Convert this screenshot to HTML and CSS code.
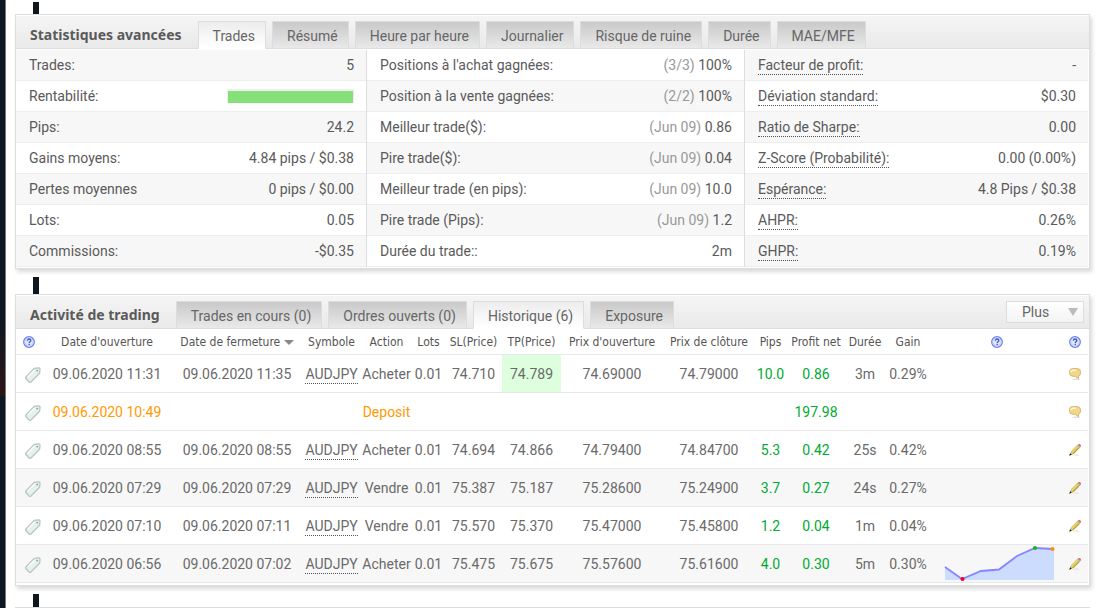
FILE: index.html
```html
<!DOCTYPE html>
<html lang="fr">

<head>
    <meta charset="UTF-8">
    <meta name="viewport" content="width=device-width, initial-scale=1.0">
    <title>Statistiques avancées</title>
    <link rel="stylesheet" href="styles.css">
</head>

<body>

    <svg class="defs" aria-hidden="true">
        <symbol id="icon-help" viewBox="0 0 12 12">
            <circle cx="6" cy="6" r="5.3" fill="#dfe6fd" stroke="#6a84ea" stroke-width="1.3"/>
            <circle cx="6" cy="6" r="4.2" fill="none" stroke="#b9c6f8" stroke-width="0.8"/>
            <path d="M4.4 4.7C4.5 3.5 5.2 3 6.1 3c1 0 1.7.6 1.7 1.4C7.8 5.6 6.2 5.7 6.2 7" fill="none" stroke="#3f54cc" stroke-width="1.3"/>
            <rect x="5.5" y="7.8" width="1.4" height="1.3" fill="#3f54cc"/>
        </symbol>
        <symbol id="icon-tag" viewBox="0 0 16 16">
            <path d="M9.3 1.3 13.7.8Q15 .7 15 2.2L14.6 6.2 6 15Q5 15.8 4 14.9L1 11.7Q.2 10.8 1 9.9Z" fill="#e6f1ee" stroke="#b4c5c2" stroke-width="1.3"/>
            <path d="M9.7 2.8 3 9.8" fill="none" stroke="#fff" stroke-width="1.2"/>
            <circle cx="12.2" cy="3.6" r="0.9" fill="#8b9a98"/>
        </symbol>
        <symbol id="icon-comment" viewBox="0 0 12 12">
            <ellipse cx="7" cy="11.2" rx="4" ry="0.8" fill="#e0e0e0"/>
            <path d="M4 .6H8Q11.5.6 11.5 3.6V4.8Q11.5 7.6 9.4 8.1L9.6 10.8 6.3 8.3H4Q.5 8.3.5 4.8V3.6Q.5.6 4 .6Z" fill="#f0d78c" stroke="#d9b56a" stroke-width="1"/>
            <path d="M2.3 4.2Q2.3 2.3 4.2 2.3H7.2" fill="none" stroke="#fff8d8" stroke-width="1.4"/>
        </symbol>
        <symbol id="icon-pencil" viewBox="0 0 12 12">
            <path d="M3 11.8H10.5L8 10Z" fill="#e4e4e4"/>
            <path d="M1.7 7.9 8.3 1.3 10.7 3.7 4.1 10.3Z" fill="#ead65e" stroke="#b5a04a" stroke-width="0.5"/>
            <path d="M3.8 9.8 10.2 3.4" stroke="#8c7a35" stroke-width="0.9"/>
            <path d="M7.9 1.7 9.1.5 11.5 2.9 10.3 4.1Z" fill="#aab6bc"/>
            <path d="M8.9.5Q10.3-.4 11.4.6 12.4 1.7 11.5 3.1Z" fill="#e85858"/>
            <path d="M1.7 7.9 4.1 10.3.5 11.5Z" fill="#d9b988"/>
            <path d="M1.2 9.3 2.7 10.8.2 11.8Z" fill="#111"/>
        </symbol>
    </svg>

    <main class="page">
        <div class="connector"></div>

        <section class="panel">
            <div class="panel-header">
                <h2>Statistiques avancées</h2>
                <div class="tabs">
                    <button type="button" class="tab active">Trades</button>
                    <button type="button" class="tab">Résumé</button>
                    <button type="button" class="tab">Heure par heure</button>
                    <button type="button" class="tab">Journalier</button>
                    <button type="button" class="tab">Risque de ruine</button>
                    <button type="button" class="tab">Durée</button>
                    <button type="button" class="tab">MAE/MFE</button>
                </div>
            </div>

            <div class="stats">
                <table class="stats-table">
                    <tr><th scope="row">Trades:</th><td>5</td></tr>
                    <tr><th scope="row">Rentabilité:</th><td><div class="profit-bar"></div></td></tr>
                    <tr><th scope="row">Pips:</th><td>24.2</td></tr>
                    <tr><th scope="row">Gains moyens:</th><td>4.84 pips / $0.38</td></tr>
                    <tr><th scope="row">Pertes moyennes</th><td>0 pips / $0.00</td></tr>
                    <tr><th scope="row">Lots:</th><td>0.05</td></tr>
                    <tr><th scope="row">Commissions:</th><td>-$0.35</td></tr>
                </table>
                <table class="stats-table shifted">
                    <tr><th scope="row">Positions à l'achat gagnées:</th><td><span class="muted">(3/3)</span> 100%</td></tr>
                    <tr><th scope="row">Position à la vente gagnées:</th><td><span class="muted">(2/2)</span> 100%</td></tr>
                    <tr><th scope="row">Meilleur trade($):</th><td><span class="muted">(Jun 09)</span> 0.86</td></tr>
                    <tr><th scope="row">Pire trade($):</th><td><span class="muted">(Jun 09)</span> 0.04</td></tr>
                    <tr><th scope="row">Meilleur trade (en pips):</th><td><span class="muted">(Jun 09)</span> 10.0</td></tr>
                    <tr><th scope="row">Pire trade (Pips):</th><td><span class="muted">(Jun 09)</span> 1.2</td></tr>
                    <tr><th scope="row">Durée du trade::</th><td>2m</td></tr>
                </table>
                <table class="stats-table">
                    <tr><th scope="row"><span class="hint">Facteur de profit:</span></th><td>-</td></tr>
                    <tr><th scope="row"><span class="hint">Déviation standard:</span></th><td>$0.30</td></tr>
                    <tr><th scope="row"><span class="hint">Ratio de Sharpe:</span></th><td>0.00</td></tr>
                    <tr><th scope="row"><span class="hint">Z-Score (Probabilité):</span></th><td>0.00 (0.00%)</td></tr>
                    <tr><th scope="row"><span class="hint">Espérance:</span></th><td>4.8 Pips / $0.38</td></tr>
                    <tr><th scope="row"><span class="hint">AHPR:</span></th><td>0.26%</td></tr>
                    <tr><th scope="row"><span class="hint">GHPR:</span></th><td>0.19%</td></tr>
                </table>
            </div>
        </section>

        <div class="connector"></div>

        <section class="panel">
            <div class="panel-header">
                <h2>Activité de trading</h2>
                <div class="tabs">
                    <button type="button" class="tab">Trades en cours (0)</button>
                    <button type="button" class="tab">Ordres ouverts (0)</button>
                    <button type="button" class="tab active">Historique (6)</button>
                    <button type="button" class="tab">Exposure</button>
                </div>
                <button type="button" class="more">Plus <span class="arrow"></span></button>
            </div>

            <table class="history">
                <colgroup>
                    <col class="c-icon"><col class="c-date"><col class="c-date"><col class="c-symbol">
                    <col class="c-action"><col class="c-lots"><col class="c-sl"><col class="c-tp">
                    <col class="c-open"><col class="c-close"><col class="c-pips"><col class="c-profit">
                    <col class="c-time"><col class="c-gain"><col class="c-chart"><col class="c-icon">
                </colgroup>
                <thead>
                    <tr>
                        <th><svg class="help"><use href="#icon-help"/></svg></th>
                        <th>Date d'ouverture</th>
                        <th>Date de fermeture <span class="arrow small"></span></th>
                        <th>Symbole</th>
                        <th>Action</th>
                        <th>Lots</th>
                        <th>SL(Price)</th>
                        <th>TP(Price)</th>
                        <th>Prix d'ouverture</th>
                        <th>Prix de clôture</th>
                        <th>Pips</th>
                        <th>Profit net</th>
                        <th>Durée</th>
                        <th>Gain</th>
                        <th><svg class="help"><use href="#icon-help"/></svg></th>
                        <th><svg class="help"><use href="#icon-help"/></svg></th>
                    </tr>
                </thead>
                <tbody>
                    <tr>
                        <td><svg class="tag"><use href="#icon-tag"/></svg></td>
                        <td>09.06.2020 11:31</td><td>09.06.2020 11:35</td>
                        <td><span class="hint">AUDJPY</span></td>
                        <td>Acheter</td><td>0.01</td><td>74.710</td><td class="hit">74.789</td>
                        <td>74.69000</td><td>74.79000</td>
                        <td class="gain">10.0</td><td class="gain">0.86</td>
                        <td>3m</td><td>0.29%</td><td></td>
                        <td><svg class="edit"><use href="#icon-comment"/></svg></td>
                    </tr>
                    <tr class="deposit">
                        <td><svg class="tag"><use href="#icon-tag"/></svg></td>
                        <td>09.06.2020 10:49</td><td></td><td></td>
                        <td>Deposit</td><td></td><td></td><td></td><td></td><td></td><td></td>
                        <td class="gain">197.98</td>
                        <td></td><td></td><td></td>
                        <td><svg class="edit"><use href="#icon-comment"/></svg></td>
                    </tr>
                    <tr>
                        <td><svg class="tag"><use href="#icon-tag"/></svg></td>
                        <td>09.06.2020 08:55</td><td>09.06.2020 08:55</td>
                        <td><span class="hint">AUDJPY</span></td>
                        <td>Acheter</td><td>0.01</td><td>74.694</td><td>74.866</td>
                        <td>74.79400</td><td>74.84700</td>
                        <td class="gain">5.3</td><td class="gain">0.42</td>
                        <td>25s</td><td>0.42%</td><td></td>
                        <td><svg class="edit"><use href="#icon-pencil"/></svg></td>
                    </tr>
                    <tr class="alt">
                        <td><svg class="tag"><use href="#icon-tag"/></svg></td>
                        <td>09.06.2020 07:29</td><td>09.06.2020 07:29</td>
                        <td><span class="hint">AUDJPY</span></td>
                        <td>Vendre</td><td>0.01</td><td>75.387</td><td>75.187</td>
                        <td>75.28600</td><td>75.24900</td>
                        <td class="gain">3.7</td><td class="gain">0.27</td>
                        <td>24s</td><td>0.27%</td><td></td>
                        <td><svg class="edit"><use href="#icon-pencil"/></svg></td>
                    </tr>
                    <tr>
                        <td><svg class="tag"><use href="#icon-tag"/></svg></td>
                        <td>09.06.2020 07:10</td><td>09.06.2020 07:11</td>
                        <td><span class="hint">AUDJPY</span></td>
                        <td>Vendre</td><td>0.01</td><td>75.570</td><td>75.370</td>
                        <td>75.47000</td><td>75.45800</td>
                        <td class="gain">1.2</td><td class="gain">0.04</td>
                        <td>1m</td><td>0.04%</td><td></td>
                        <td><svg class="edit"><use href="#icon-pencil"/></svg></td>
                    </tr>
                    <tr class="alt">
                        <td><svg class="tag"><use href="#icon-tag"/></svg></td>
                        <td>09.06.2020 06:56</td><td>09.06.2020 07:02</td>
                        <td><span class="hint">AUDJPY</span></td>
                        <td>Acheter</td><td>0.01</td><td>75.475</td><td>75.675</td>
                        <td>75.57600</td><td>75.61600</td>
                        <td class="gain">4.0</td><td class="gain">0.30</td>
                        <td>5m</td><td>0.30%</td>
                        <td>
                            <svg class="sparkline" viewBox="0 0 112 36">
                                <path d="M2 21 19 33 38 25 56 23.5 74 10 92 2 111 3V34H2Z" fill="#ccdcff"/>
                                <path d="M2 21 19 33 38 25 56 23.5 74 10 92 2 110 3" fill="none" stroke="#8585ff" stroke-width="1.8"/>
                                <circle cx="19.5" cy="33" r="2" fill="#f00020"/>
                                <circle cx="92" cy="2" r="2" fill="#10b818"/>
                                <circle cx="109.5" cy="3" r="2" fill="#ff8c10"/>
                            </svg>
                        </td>
                        <td><svg class="edit"><use href="#icon-pencil"/></svg></td>
                    </tr>
                </tbody>
            </table>
        </section>

        <div class="connector"></div>
        <section class="panel"></section>
    </main>

</body>
</html>
```
FILE: styles.css
```css
body {
    margin: 0;
    background: linear-gradient(#0f1822 0, #0f1822 320px, #2c1519 395px, #0f1822 396px, #0f1822 608px);
    font-family: Tahoma, Roboto, sans-serif;
    font-size: 14px;
    color: #5a5a5a;
}

.defs {
    display: none;
}

.page {
    box-sizing: border-box;
    min-height: 100vh;
    margin-left: 5px;
    padding: 2px 10px 0 9px;
    border-left: 1px solid #777;
    background-color: #fff;
}

.connector {
    width: 6px;
    height: 12px;
    margin-left: 18px;
    background-color: #0e161e;
}

.panel {
    border: 1px solid #ddd;
    box-shadow: 2px 3px 4px rgba(0, 0, 0, 0.15);
    background-color: #fff;
}

.panel:last-child {
    border-bottom: 0;
}

.panel + .connector {
    margin-top: 8px;
    height: 17px;
}

.panel + .connector:nth-last-child(2) {
    height: 13px;
}

.panel-header {
    display: flex;
    align-items: flex-end;
    height: 32px;
    margin-top: 1px;
    border-bottom: 1px solid #ddd;
    background: linear-gradient(#f5f5f5, #e9e9e9);
}

.panel-header h2 {
    margin: 0 16px 0 14px;
    font-family: Tahoma, "Noto Sans", sans-serif;
    font-size: 14px;
    line-height: 27px;
}

.tabs {
    display: flex;
    gap: 6px;
    margin-bottom: -1px;
}

.tab {
    height: 28px;
    padding: 1px 10px 0 14px;
    border: 1px solid #ddd;
    border-radius: 0;
    background: linear-gradient(#c9c9c9, #e9e9e9);
    font: inherit;
    color: #666;
}

.tab.active {
    border-bottom-color: #fff;
    background: linear-gradient(#ededed, #fff);
}

.more {
    display: flex;
    align-items: center;
    justify-content: space-between;
    width: 78px;
    height: 22px;
    margin: 0 5px 5px auto;
    padding: 0 5px 0 15px;
    border: 1px solid #ddd;
    background: linear-gradient(#fff, #f3f3f3);
    font: inherit;
    color: #666;
}

.arrow {
    display: inline-block;
    border: 5px solid transparent;
    border-top: 8px solid #bbb;
    border-bottom: 0;
}

.arrow.small {
    border-width: 5px 5px 0;
    border-top-color: #888;
    vertical-align: 1px;
}

.stats {
    display: grid;
    grid-template-columns: 351fr 378fr 343fr;
    padding: 1px 1px 1px 0;
}

.stats-table {
    width: 100%;
    border-spacing: 0;
    border-right: 1px solid #ddd;
}

.stats-table:last-child {
    border-right: 0;
}

.stats-table th,
.stats-table td {
    height: 30px;
    padding: 0 12px 0 13px;
    border-bottom: 1px solid #eee;
    font-weight: normal;
    text-align: left;
}

.stats-table td {
    text-align: right;
}

.stats-table tr:nth-child(odd),
.stats-table.shifted tr:nth-child(even) {
    background-color: #f7f7f7;
}

.stats-table.shifted tr:nth-child(odd) {
    background-color: #fff;
}

.muted {
    color: #999;
}

.hint {
    padding-bottom: 1px;
    border-bottom: 1px dotted #555;
}

.profit-bar {
    width: 125px;
    height: 12px;
    margin-left: auto;
    border: 1px solid #eee;
    border-width: 2px 1px 0;
    background-color: #86e07a;
}

.history {
    width: 100%;
    padding: 0 1px 2px 0;
    table-layout: fixed;
    border-spacing: 0;
    color: #6a6a6a;
}

.history th,
.history td {
    padding: 0;
    border-bottom: 1px solid #e8e8e8;
    text-align: center;
    white-space: nowrap;
}

.history th {
    height: 25px;
    font-family: Tahoma, "DejaVu Sans Condensed", sans-serif;
    font-size: 12px;
    font-weight: normal;
    color: #555;
}

.history td {
    height: 37px;
}

.history svg {
    display: block;
    margin: 0 auto;
}

.history .alt {
    background-color: #f7f7f7;
}

.history .deposit {
    color: #ff9900;
}

.history .hit {
    background-color: #dfd;
}

.history .gain {
    color: #00aa33;
}

.help,
.edit {
    width: 12px;
    height: 12px;
}

.history .tag {
    width: 16px;
    height: 16px;
    margin: 3px 1px 0 auto;
}

.history .sparkline {
    width: 112px;
    height: 36px;
    margin-left: 11px;
}

.c-icon { width: 26px; }
.c-date { width: 130px; }
.c-symbol { width: 59px; }
.c-action { width: 51px; }
.c-lots { width: 33px; }
.c-sl { width: 57px; }
.c-tp { width: 59px; }
.c-open { width: 102px; }
.c-close { width: 92px; }
.c-pips { width: 31px; }
.c-profit { width: 60px; }
.c-time { width: 38px; }
.c-gain { width: 48px; }
.c-chart { width: 130px; }
```
